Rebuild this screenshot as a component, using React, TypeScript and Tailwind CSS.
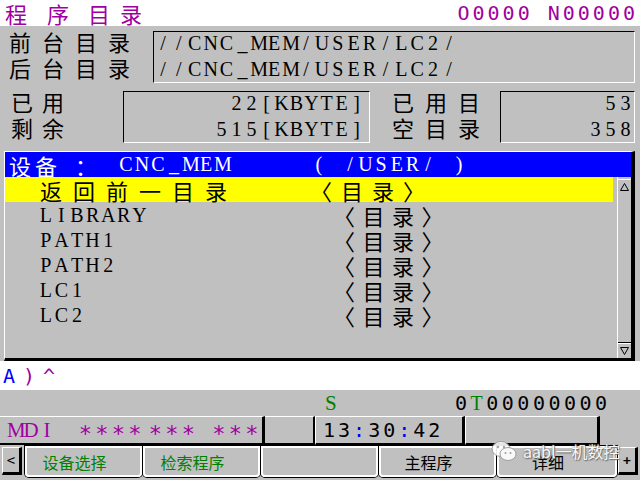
import React from 'react';

const CJK = "font-['Noto_Sans_CJK_SC',sans-serif]";
const SERIF = "font-['Liberation_Serif',serif]";
const DJV = "font-['DejaVu_Sans_Mono',monospace]";

const dirs = ['LIBRARY', 'PATH1', 'PATH2', 'LC1', 'LC2'];

// fixed-pitch text, the CNC screen font is a cell font
function Fx({ t, w }: { t: string; w: string }) {
  return (
    <>
      {t.split('').map((c, i) => (
        <span key={i} className={`inline-block text-center ${w}`}>
          {c === ' ' ? '\u00a0' : c}
        </span>
      ))}
    </>
  );
}

function Tri({ down }: { down?: boolean }) {
  return (
    <svg width="9" height="8" viewBox="0 0 9 8">
      <path d={down ? 'M0.5 0.5 H8.5 L4.5 7.5 Z' : 'M4.5 0.5 L8.5 7.5 H0.5 Z'} fill="none" stroke="#000" strokeWidth="1" />
    </svg>
  );
}

function SoftKey({ label, green, w }: { label?: string; green?: boolean; w: string }) {
  return (
    <div className={`${w} flex h-[31px] items-center justify-center rounded-b-[4px] border-2 border-white pr-[18px] text-[16px] leading-none shadow-[0_0_0_1px_#000] ${CJK} ${green ? 'text-[#008000]' : 'text-black'}`}>
      {label}
    </div>
  );
}

function Stars({ n, ml }: { n: number; ml: string }) {
  return (
    <span className={`${ml} inline-flex`}>
      {Array.from({ length: n }).map((_, i) => (
        <span key={i} className="inline-block w-[16.5px] text-center">∗</span>
      ))}
    </span>
  );
}

export default function App() {
  return (
    <div className="relative flex h-[480px] w-[640px] flex-col overflow-hidden bg-[#c0c0c0] select-none">
      {/* title bar */}
      <div className="flex h-[26px] items-center justify-between bg-white pr-[2px] text-[#a000a0]">
        <div className={`flex h-[26px] items-center text-[22px] leading-none ${CJK}`}>
          <span className="ml-[5px]">程</span>
          <span className="ml-[20px]">序</span>
          <span className="ml-[19px]">目</span>
          <span className="ml-[10px]">录</span>
        </div>
        <div className={`text-[20px] leading-[26px] tracking-[3px] ${DJV}`}>O0000 N00000</div>
      </div>

      {/* foreground / background dirs */}
      <div className="flex pt-[5px] text-black">
        <div className={`mt-[-3px] w-[153px] pl-[9px] text-[22px] leading-[26px] tracking-[11px] ${CJK}`}>
          <div>前台目录</div>
          <div>后台目录</div>
        </div>
        <div className="h-[52px] w-[482px] border border-black border-r-white border-b-white">
          <div className={`mt-[-2px] pl-[1px] text-[20px] leading-[26px] ${SERIF}`}>
            <div className="whitespace-nowrap"><Fx t="//CNC_MEM/USER/LC2/" w="w-[15.9px]" /></div>
            <div className="whitespace-nowrap"><Fx t="//CNC_MEM/USER/LC2/" w="w-[15.9px]" /></div>
          </div>
        </div>
      </div>

      {/* usage */}
      <div className="mt-[8px] flex text-black">
        <div className={`mt-[-3px] w-[123px] pl-[11px] text-[22px] leading-[26px] tracking-[9px] ${CJK}`}>
          <div>已用</div>
          <div>剩余</div>
        </div>
        <div className="h-[52px] w-[247px] border border-black border-r-white border-b-white">
          <div className={`mt-[-2px] pr-[5px] text-right text-[20px] leading-[26px] ${SERIF}`}>
            <div className="whitespace-nowrap"><Fx t="22[KBYTE]" w="w-[15px]" /></div>
            <div className="whitespace-nowrap"><Fx t="515[KBYTE]" w="w-[15px]" /></div>
          </div>
        </div>
        <div className={`mt-[-3px] w-[130px] pl-[22px] text-[22px] leading-[26px] tracking-[11px] ${CJK}`}>
          <div>已用目</div>
          <div>空目录</div>
        </div>
        <div className="h-[52px] w-[135px] border border-black border-r-white border-b-white">
          <div className={`mt-[-2px] pr-[1px] text-right text-[20px] leading-[26px] ${SERIF}`}>
            <div><Fx t="53" w="w-[15px]" /></div>
            <div><Fx t="358" w="w-[15px]" /></div>
          </div>
        </div>
      </div>

      {/* directory list */}
      <div className="mt-[8px] ml-[4px] flex h-[210px] w-[631px] flex-col border-t border-l border-white border-r-[4px] border-b-[3px] border-r-black border-b-black">
        <div className="flex h-[25px] items-center bg-[#0000ff] text-white">
          <span className={`flex w-[113px] items-center pl-[4px] text-[22px] leading-none ${CJK}`}>
            <span>设</span>
            <span className="ml-[4px]">备</span>
            <span className="ml-[18px]">：</span>
          </span>
          <span className={`w-[193px] whitespace-nowrap text-[20px] leading-[25px] ${SERIF}`}><Fx t="CNC_MEM" w="w-[16px]" /></span>
          <span className={`whitespace-nowrap text-[20px] leading-[25px] ${SERIF}`}><Fx t="( /USER/ )" w="w-[15.6px]" /></span>
        </div>
        <div className="flex flex-1">
          <div className="w-[608px]">
            <div className="flex h-[25px] items-center bg-[#ffff00] text-black">
              <span className={`w-[305px] pl-[35px] text-[22px] leading-none tracking-[11px] ${CJK}`}>返回前一目录</span>
              <span className={`text-[22px] leading-none tracking-[9px] ${CJK}`}>〈目录〉</span>
            </div>
            {dirs.map((d) => (
              <div key={d} className="flex h-[25px] items-center text-black">
                <span className={`w-[328px] whitespace-nowrap pl-[33px] text-[20px] leading-none ${SERIF}`}><Fx t={d} w="w-[15.6px]" /></span>
                <span className={`text-[22px] leading-none tracking-[7.5px] ${CJK}`}>〈目录〉</span>
              </div>
            ))}
          </div>
          <div className="ml-[4px] flex w-[14px] flex-col border-l border-white">
            <div className="mt-[2px] flex h-[14px] items-center justify-center border-t border-white">
              <Tri />
            </div>
            <div className="flex-1" />
            <div className="border-t border-black">
              <div className="flex h-[15px] items-center justify-center border-t border-white">
                <Tri down />
              </div>
            </div>
          </div>
        </div>
      </div>

      {/* key-in line */}
      <div className={`flex h-[29px] items-center bg-white pl-[3px] text-[20px] leading-none ${DJV}`}>
        <span className="w-[20px] text-[#0000ff]">A</span>
        <span className="w-[20px] text-[#a000a0]">)</span>
        <span className="w-[20px] text-[#a000a0]">^</span>
      </div>

      {/* status */}
      <div className="flex h-[26px] items-center">
        <span className={`ml-[325px] w-[130px] text-[21px] leading-none text-[#008000] ${SERIF}`}>S</span>
        <span className={`text-[20px] leading-none tracking-[3.5px] text-black ${DJV}`}>
          0<span className={`text-[#008000] ${SERIF}`}>T</span>00000000
        </span>
      </div>

      {/* mode row */}
      <div className="flex h-[29px]">
        <div className="flex w-[265px] items-center whitespace-nowrap border-t border-white border-r-[3px] border-b-[2px] border-r-black border-b-black pl-[7px] text-[#a000a0]">
          <span className={`text-[21px] leading-none ${SERIF}`}><Fx t="MDI" w="w-[16px]" /></span>
          <span className={`text-[22px] leading-none ${DJV}`}>
            <Stars n={4} ml="ml-[22px]" />
            <Stars n={3} ml="ml-[4px]" />
            <Stars n={3} ml="ml-[14px]" />
          </span>
        </div>
        <div className="w-[50px] border-t border-white border-r-[2px] border-b-[2px] border-r-black border-b-black" />
        <div className={`flex w-[150px] items-center border-t border-l border-white border-r-[3px] border-b-[2px] border-r-black border-b-black pl-[7px] text-[20px] leading-none tracking-[3px] text-black ${DJV}`}>
          13<span className="text-[#0000ff]">:</span>30<span className="text-[#0000ff]">:</span>42
        </div>
        <div className="w-[135px] border-t border-l border-white border-r-[3px] border-b-[2px] border-r-black border-b-black" />
      </div>

      {/* soft keys */}
      <div className="flex items-start pt-[1px]">
        <div className={`mt-[1px] ml-[2px] flex h-[28px] w-[20px] items-center justify-center border-t border-l border-white border-r-[3px] border-b-[3px] border-r-black border-b-black text-[14px] leading-none text-black ${DJV}`}>
          &lt;
        </div>
        <div className="ml-[3px] flex gap-[1px]">
          <SoftKey w="w-[117px]" label="设备选择" green />
          <SoftKey w="w-[117px]" label="检索程序" green />
          <SoftKey w="w-[117px]" />
          <SoftKey w="w-[117px]" label="主程序" />
          <SoftKey w="w-[120px]" label="详细" />
        </div>
        <div className={`mt-[1px] ml-[1px] flex h-[28px] w-[20px] items-center justify-center border-t border-l border-white border-r-[3px] border-b-[3px] border-r-black border-b-black text-[13px] font-bold leading-none text-black ${DJV}`}>
          +
        </div>
      </div>

      {/* watermark */}
      <div className="pointer-events-none absolute top-[440px] left-[491px] flex items-center gap-[6px] opacity-90">
        <svg width="26" height="22" viewBox="0 0 26 22">
          <ellipse cx="10" cy="9" rx="9" ry="7.5" fill="#fff" stroke="#9a9a9a" strokeWidth="1" />
          <ellipse cx="17" cy="14" rx="8" ry="6.5" fill="#fff" stroke="#9a9a9a" strokeWidth="1" />
          <circle cx="7" cy="7" r="1.2" fill="#9a9a9a" />
          <circle cx="13" cy="7" r="1.2" fill="#9a9a9a" />
          <circle cx="14.5" cy="13" r="1" fill="#9a9a9a" />
          <circle cx="19.5" cy="13" r="1" fill="#9a9a9a" />
        </svg>
        <span className={`text-[16px] leading-none text-white [text-shadow:0_0_2px_#6a6a6a,1px_1px_1px_#6a6a6a] ${CJK}`}>aabl一机数控</span>
      </div>
    </div>
  );
}
